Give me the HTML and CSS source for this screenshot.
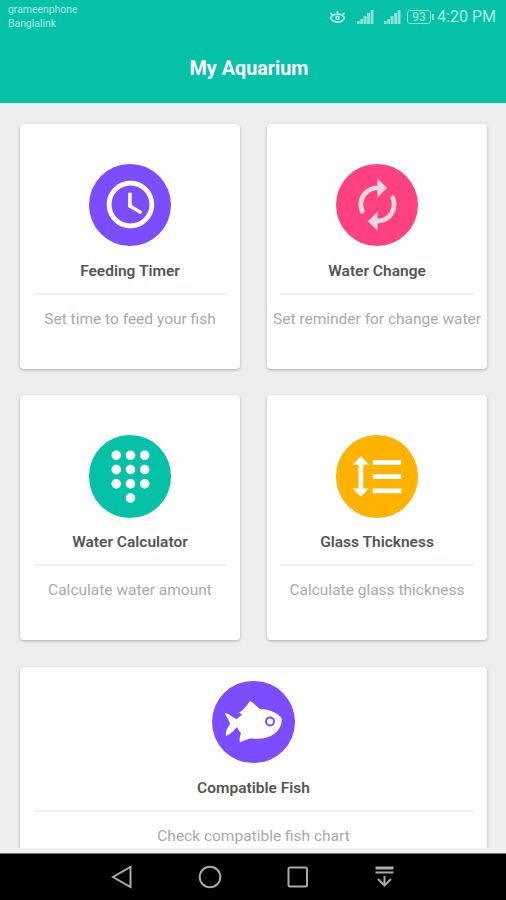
FILE: index.html
```html
<!DOCTYPE html>
<html lang="en">

<head>
    <meta charset="UTF-8">
    <meta name="viewport" content="width=device-width, initial-scale=1.0">
    <title>My Aquarium</title>
    <link rel="stylesheet" href="styles.css">
</head>

<body>
    <div class="header">
        <div class="status">
            <div class="carrier">grameenphone<br>Banglalink</div>
            <div class="status-right">
                <svg class="eye" width="17" height="15" viewBox="0 0 18 16">
                    <path d="M1.500 9.500C4.500 4 13.500 4 16.500 9.500C13.500 15.500 4.500 15.500 1.500 9.500Z M3.500 6.500L1.500 4 M9 5V2 M14.500 6.500L16.500 4" />
                    <circle cx="9" cy="9.300" r="1.600" />
                </svg>
                <svg class="signal" width="17" height="15" viewBox="0 0 17 15">
                    <path d="M0 12h2.700v3H0z M3.300 10H6v5H3.300z M6.600 7h2.900v8H6.600z M10.100 4H13v11h-2.900z M13.600 1h2.900v14h-2.900z" />
                </svg>
                <svg class="signal second" width="17" height="15" viewBox="0 0 17 15">
                    <path d="M0 12h2.700v3H0z M3.300 10H6v5H3.300z M6.600 7h2.900v8H6.600z M10.100 4H13v11h-2.900z M13.600 1h2.900v14h-2.900z" />
                </svg>
                <div class="battery">93</div>
                <span class="time">4:20 PM</span>
            </div>
        </div>
        <h1>My Aquarium</h1>
    </div>

    <div class="content">
        <div class="card">
            <div class="circle purple">
                <svg width="57" height="57" viewBox="0 0 24 24">
                    <path d="M11.990 2C6.470 2 2 6.480 2 12s4.470 10 9.990 10C17.520 22 22 17.520 22 12S17.520 2 11.990 2zM12 20c-4.420 0-8-3.580-8-8s3.580-8 8-8 8 3.580 8 8-3.580 8-8 8zm.5-13H11v6l5.250 3.150.75-1.230-4.500-2.670z" />
                </svg>
            </div>
            <h2>Feeding Timer</h2>
            <p>Set time to feed your fish</p>
        </div>
        <div class="card">
            <div class="circle pink">
                <svg width="57" height="57" viewBox="0 0 24 24">
                    <path d="M12 6v3l4-4-4-4v3c-4.420 0-8 3.580-8 8 0 1.570.46 3.030 1.240 4.260L6.700 14.800c-.45-.83-.7-1.790-.7-2.800 0-3.310 2.690-6 6-6zm6.760 1.740L17.300 9.200c.44.84.7 1.790.7 2.800 0 3.310-2.690 6-6 6v-3l-4 4 4 4v-3c4.420 0 8-3.580 8-8 0-1.570-.46-3.030-1.240-4.260z" />
                </svg>
            </div>
            <h2>Water Change</h2>
            <p>Set reminder for change water</p>
        </div>
        <div class="card">
            <div class="circle green">
                <svg width="57" height="57" viewBox="0 0 24 24">
                    <path d="M12 19c-1.100 0-2 .9-2 2s.9 2 2 2 2-.9 2-2-.9-2-2-2zM6 1c-1.100 0-2 .9-2 2s.9 2 2 2 2-.9 2-2-.9-2-2-2zm0 6c-1.100 0-2 .9-2 2s.9 2 2 2 2-.9 2-2-.9-2-2-2zm0 6c-1.100 0-2 .9-2 2s.9 2 2 2 2-.9 2-2-.9-2-2-2zm12-8c1.100 0 2-.9 2-2s-.9-2-2-2-2 .9-2 2 .9 2 2 2zm-6 8c-1.100 0-2 .9-2 2s.9 2 2 2 2-.9 2-2-.9-2-2-2zm6 0c-1.100 0-2 .9-2 2s.9 2 2 2 2-.9 2-2-.9-2-2-2zm0-6c-1.100 0-2 .9-2 2s.9 2 2 2 2-.9 2-2-.9-2-2-2zm-6 0c-1.100 0-2 .9-2 2s.9 2 2 2 2-.9 2-2-.9-2-2-2zm0-6c-1.100 0-2 .9-2 2s.9 2 2 2 2-.9 2-2-.9-2-2-2z" />
                </svg>
            </div>
            <h2>Water Calculator</h2>
            <p>Calculate water amount</p>
        </div>
        <div class="card">
            <div class="circle orange">
                <svg width="57" height="57" viewBox="0 0 24 24">
                    <path d="M6 7h2.500L5 3.500 1.500 7H4v10H1.500L5 20.500 8.500 17H6V7zm4-2v2h12V5H10zm0 14h12v-2H10v2zm0-6h12v-2H10v2z" />
                </svg>
            </div>
            <h2>Glass Thickness</h2>
            <p>Calculate glass thickness</p>
        </div>
        <div class="card wide">
            <div class="circle purple">
                <svg width="57" height="42" viewBox="0 0 57 42">
                    <path d="M0 12C5 13 8 17 12 18C14 16 15 15 17 14C16 13 15 12 14 11.500C19 9 22 4 25 0C29 2 32 6 35 8C44 8 53 12 56.500 17C58 27 49 37 35 37.500C32 38 27 37.500 25 37.500C22 38 18 40 15 41.500C14 39 15 35 16 32C14 30 13 28 12 26C9 29 6 33 1 35C0 30 3 26 5 23C4 18 1 16 0 12Z" />
                    <circle class="fish-eye" cx="45" cy="20.500" r="4" />
                </svg>
            </div>
            <h2>Compatible Fish</h2>
            <p>Check compatible fish chart</p>
        </div>
    </div>

    <div class="navbar">
        <svg width="22" height="24" viewBox="0 0 22 24">
            <path d="M19.500 2v20L2 12z" />
        </svg>
        <svg width="24" height="24" viewBox="0 0 24 24">
            <circle cx="12" cy="12" r="10.300" />
        </svg>
        <svg width="22" height="24" viewBox="0 0 22 24">
            <rect x="1.500" y="2.500" width="18.500" height="19" rx="1.500" />
        </svg>
        <svg width="20" height="24" viewBox="0 0 20 24">
            <path class="thick" d="M1.500 3h18" />
            <path d="M1.500 7.500h18M10.500 11v9.500M4 14l6.500 6.500 6.500-6.500" />
        </svg>
    </div>
</body>

</html>
```
FILE: styles.css
```css
* {
    box-sizing: border-box;
    margin: 0;
    padding: 0;
}

body {
    display: flex;
    flex-direction: column;
    height: 900px;
    overflow: hidden;
    font-family: Roboto, "Liberation Sans", sans-serif;
    background-color: #f1f1f1;
}

svg {
    display: block;
}

.header {
    flex: none;
    height: 103px;
    background-color: #04c1a8;
    color: #fff;
}

.status {
    display: flex;
    justify-content: space-between;
    height: 34px;
    padding: 3px 10px 0 8px;
    color: #b0ece2;
}

.carrier {
    font-size: 10.4px;
    line-height: 14px;
}

.status-right {
    display: flex;
    align-items: center;
    height: 27px;
}

.eye {
    margin-right: 11px;
    fill: none;
    stroke: #b0ece2;
    stroke-width: 1.8;
}

.signal {
    margin-right: 10px;
    fill: #8fe3d6;
}

.second {
    margin-right: 6px;
}

.battery {
    position: relative;
    width: 24px;
    height: 14px;
    margin-right: 6px;
    border: 1px solid #8fe3d6;
    border-radius: 3px;
    font-size: 12px;
    line-height: 12px;
    text-align: center;
}

.battery::after {
    content: "";
    position: absolute;
    top: 3px;
    right: -4px;
    width: 2px;
    height: 6px;
    background-color: #8fe3d6;
}

.time {
    font-size: 16px;
}

h1 {
    padding-right: 8px;
    font-size: 19.8px;
    font-weight: 700;
    line-height: 69px;
    text-align: center;
}

.content {
    display: grid;
    flex: none;
    grid-template-columns: 220px 220px;
    grid-auto-rows: 245px;
    gap: 26.5px 27px;
    height: 745px;
    padding: 20.5px 0 0 20px;
    overflow: hidden;
    background-color: #ededed;
}

.card {
    display: flex;
    flex-direction: column;
    align-items: center;
    padding: 40px 13px 0;
    border-radius: 4px;
    background-color: #fff;
    box-shadow: 0 1px 3px rgba(0, 0, 0, 0.28);
}

.wide {
    grid-column: span 2;
    padding-top: 14px;
}

.circle {
    display: flex;
    flex: none;
    align-items: center;
    justify-content: center;
    width: 82.5px;
    height: 82.5px;
    border-radius: 50%;
    fill: #fff;
}

.purple {
    background-color: #7c4dff;
}

.pink {
    background-color: #ff4081;
    fill: #e6d8df;
}

.green {
    background-color: #04c1a8;
}

.orange {
    background-color: #ffb300;
}

.fish-eye {
    fill: #fff;
    stroke: #7c4dff;
    stroke-width: 2;
}

h2 {
    width: 100%;
    padding-bottom: 12px;
    margin-top: 14.5px;
    border-bottom: 2px solid #f1f1f1;
    color: #555;
    font-size: 15.5px;
    font-weight: 600;
    line-height: 20px;
    text-align: center;
}

p {
    margin-top: 14px;
    color: #a9a9a9;
    font-size: 15.5px;
    line-height: 20px;
    white-space: nowrap;
}

.navbar {
    display: flex;
    flex: none;
    align-items: center;
    gap: 65px;
    height: 47px;
    margin-top: 5px;
    padding-left: 111px;
    border-top: 1px solid #777;
    background-color: #000;
    fill: none;
    stroke: #aaa;
    stroke-width: 2;
}

.thick {
    stroke-width: 3;
}
```
